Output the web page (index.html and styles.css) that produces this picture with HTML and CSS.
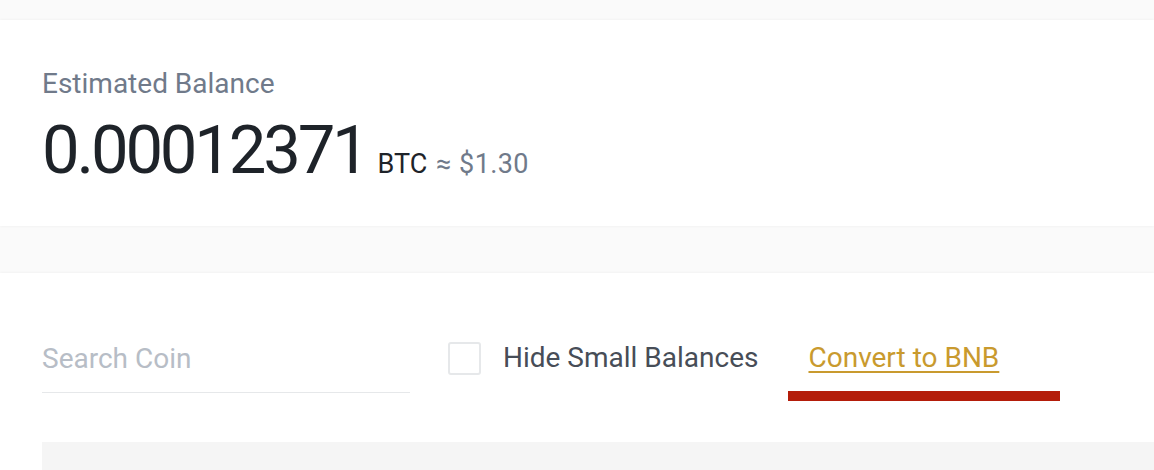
FILE: index.html
```html
<!DOCTYPE html>
<html>
<head>
<meta charset="utf-8">
<link rel="stylesheet" href="styles.css">
</head>
<body>
<div class="page">
  <section class="card balance">
    <div class="label">Estimated Balance</div>
    <div class="amount-row">
      <span class="amount">0.00012371</span>
      <span class="unit">BTC</span>
      <span class="approx">≈ $1.30</span>
    </div>
  </section>
  <section class="card assets">
    <div class="toolbar">
      <div class="search">
        <input class="search-input" type="text" placeholder="Search Coin">
      </div>
      <label class="hide-small">
        <span class="checkbox"></span>
        <span class="hide-text">Hide Small Balances</span>
      </label>
      <div class="convert">
        <a class="convert-link" href="#">Convert to BNB</a>
        <div class="highlight"></div>
      </div>
    </div>
    <div class="table-head"></div>
  </section>
</div>
</body>
</html>
```
FILE: styles.css
```css
html, body {
  margin: 0;
  padding: 0;
  background: #fafafa;
  overflow: hidden;
}
.page {
  padding-top: 20px;
  font-family: Roboto, "Liberation Sans", sans-serif;
}
.card {
  background: #ffffff;
  box-shadow: 0 0 3px rgba(0, 0, 0, 0.06);
}
.balance {
  padding: 46px 42px 42px;
  height: 118px;
  margin-bottom: 47px;
}
.label {
  font-size: 28px;
  line-height: 36px;
  color: #707a8a;
}
.amount-row {
  margin-top: 15px;
  display: flex;
  align-items: baseline;
  white-space: nowrap;
}
.amount {
  font-size: 67px;
  line-height: 67px;
  color: #1e2329;
  letter-spacing: -3.2px;
}
.unit {
  font-size: 27px;
  color: #1e2329;
  margin-left: 11px;
}
.approx {
  font-size: 27px;
  color: #707a8a;
  margin-left: 9px;
  letter-spacing: 0.4px;
}
.assets {
  padding: 70px 0 0 42px;
  height: 300px;
}
.toolbar {
  display: flex;
  align-items: flex-start;
}
.search {
  width: 368px;
  margin-right: 38px;
}
.search-input {
  display: block;
  box-sizing: border-box;
  width: 100%;
  height: 50px;
  padding: 0 0 19px 0;
  margin: 0;
  border: none;
  border-bottom: 1px solid #e6e8ea;
  outline: none;
  background: transparent;
  font-family: inherit;
  font-size: 28px;
  line-height: 30px;
  color: #1e2329;
}
.search-input::placeholder {
  color: #b7bdc6;
}
.hide-small {
  display: flex;
  align-items: center;
  height: 30px;
  margin-right: 30px;
}
.checkbox {
  box-sizing: border-box;
  width: 33px;
  height: 33px;
  border: 2px solid #e6e8ea;
  border-radius: 3px;
  margin-right: 22px;
}
.hide-text {
  font-size: 28px;
  line-height: 30px;
  color: #474d57;
}
.convert {
  display: flex;
  flex-direction: column;
}
.convert-link {
  padding-left: 20px;
  font-size: 28px;
  line-height: 30px;
  color: #c99a2e;
  text-decoration: underline;
  text-decoration-thickness: 2px;
  text-underline-offset: 4px;
}
.highlight {
  margin-top: 18px;
  width: 272px;
  height: 10px;
  background: #b41d0a;
}
.table-head {
  margin-top: 41px;
  height: 60px;
  background: #f5f5f5;
}
```
